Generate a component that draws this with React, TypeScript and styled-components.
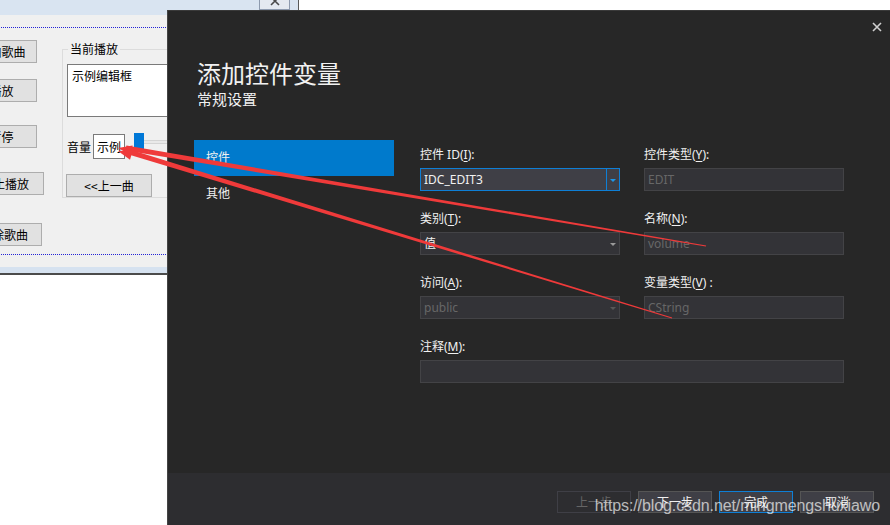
import React from "react";
import styled, { createGlobalStyle } from "styled-components";

const GlobalStyle = createGlobalStyle`
  html, body {
    margin: 0;
    padding: 0;
    background: #ffffff;
  }
  body {
    font-family: "Noto Sans", "Noto Sans CJK SC", sans-serif;
  }
`;

const Desktop = styled.div`
  position: relative;
  width: 890px;
  height: 525px;
  overflow: hidden;
  background: #ffffff;
`;

/* ---------- the old MFC dialog in the background ---------- */

const BackWindow = styled.div`
  width: 299px;
  height: 275px;
  box-sizing: border-box;
  display: flex;
  flex-direction: column;
  border-right: 1px solid #5a5a5a;
  border-bottom: 2px solid #4b4b4b;
  font-family: "Noto Sans CJK SC", sans-serif;
  font-size: 12px;
  color: #000000;
`;

const TitleStrip = styled.div`
  height: 15px;
  flex-shrink: 0;
  background: #d9e4f1;
  display: flex;
  justify-content: flex-end;
  padding-right: 8px;
`;

const CloseBox = styled.div`
  width: 31px;
  height: 18px;
  margin-top: -8px;
  box-sizing: border-box;
  border: 1px solid #8d9aae;
  background: #e4e9f0;
  display: flex;
  align-items: center;
  justify-content: center;
`;

const WinBody = styled.div`
  flex: 1;
  background: #f0f0f0;
  overflow: hidden;
`;

const BottomBand = styled.div`
  height: 6px;
  flex-shrink: 0;
  background: #d6e2f0;
`;

const DottedFrame = styled.div`
  margin: 12px 0 0 -40px;
  width: 420px;
  height: 228px;
  box-sizing: border-box;
  border: 1px dotted #2323d6;
  padding-left: 5px;
  display: flex;
  align-items: flex-start;
`;

const ButtonColumn = styled.div`
  display: flex;
  flex-direction: column;
  align-items: flex-start;
  padding-top: 12px;
  width: 78px;
`;

const WinButton = styled.div<{ $width: number; $top?: number; $shift?: number }>`
  width: ${(p) => p.$width}px;
  height: 23px;
  margin-top: ${(p) => p.$top ?? 0}px;
  margin-left: ${(p) => p.$shift ?? 0}px;
  box-sizing: border-box;
  border: 1px solid #adadad;
  background: #e1e1e1;
  display: flex;
  align-items: center;
  justify-content: center;
  white-space: nowrap;
  line-height: 14px;
`;

const GroupBox = styled.fieldset`
  margin: 14px 0 0 18px;
  padding: 0 0 0 4px;
  width: 230px;
  min-width: 0;
  border: 1px solid #dcdcdc;
`;

const GroupLegend = styled.legend`
  margin-left: 1px;
  padding: 0 2px;
  line-height: 14px;
  font-size: 12px;
`;

const EditArea = styled.div`
  margin-top: 8px;
  width: 170px;
  height: 53px;
  box-sizing: border-box;
  border: 1px solid #7a7a7a;
  background: #ffffff;
  padding: 4px;
  line-height: 14px;
`;

const VolumeRow = styled.div`
  margin-top: 17px;
  height: 25px;
  display: flex;
  align-items: center;
`;

const VolumeLabel = styled.span`
  margin-right: 2px;
`;

const VolumeBox = styled.div`
  width: 32px;
  height: 25px;
  box-sizing: border-box;
  border: 1px solid #7a7a7a;
  background: #ffffff;
  padding-left: 3px;
  line-height: 23px;
  overflow: hidden;
  white-space: nowrap;
`;

const Slider = styled.div`
  align-self: flex-start;
  margin: -1px 0 0 9px;
  height: 18px;
  display: flex;
  align-items: center;
`;

const SliderThumb = styled.div`
  width: 10px;
  height: 18px;
  background: #0078d7;
`;

const SliderTrack = styled.div`
  width: 100px;
  height: 2px;
  border-top: 1px solid #d4d4d4;
  border-bottom: 1px solid #d4d4d4;
  background: #e9e9e9;
`;

/* ---------- the dark Visual Studio dialog ---------- */

const DarkDialog = styled.div`
  position: absolute;
  left: 167px;
  top: 10px;
  width: 723px;
  height: 515px;
  box-sizing: border-box;
  background: #272727;
  border-left: 1px solid #444444;
  border-top: 1px solid #3a3a3a;
  display: flex;
  flex-direction: column;
  color: #f1f1f1;
  font-family: "Noto Sans", "Noto Sans CJK SC", sans-serif;
`;

const TopBar = styled.div`
  display: flex;
  justify-content: flex-end;
  padding: 11px 8px 0 0;
  height: 10px;
`;

const Title = styled.h1`
  margin: 27px 0 0 29px;
  font-size: 24px;
  line-height: 30px;
  font-weight: 400;
`;

const SubTitle = styled.div`
  margin: 0 0 0 29px;
  font-size: 15px;
  line-height: 20px;
`;

const DialogBody = styled.div`
  display: flex;
  align-items: flex-start;
  margin-top: 31px;
  padding-left: 26px;
`;

const SideNav = styled.div`
  width: 200px;
  display: flex;
  flex-direction: column;
`;

const NavItem = styled.div<{ $active?: boolean }>`
  height: 36px;
  line-height: 36px;
  padding-left: 12px;
  font-size: 12px;
  background: ${(p) => (p.$active ? "#007acc" : "transparent")};
  color: #f1f1f1;
`;

const Form = styled.div`
  margin-left: 26px;
  padding-top: 7px;
  display: grid;
  grid-template-columns: 200px 200px;
  column-gap: 24px;
  row-gap: 20px;
`;

const Field = styled.div<{ $wide?: boolean }>`
  display: flex;
  flex-direction: column;
  grid-column: ${(p) => (p.$wide ? "1 / -1" : "auto")};
`;

const FieldLabel = styled.label`
  font-size: 12px;
  line-height: 16px;
  margin-bottom: 5px;
  color: #f1f1f1;
  white-space: nowrap;

  u {
    text-underline-offset: 2px;
  }
`;

const InputBox = styled.div<{ $focused?: boolean; $disabled?: boolean }>`
  height: 23px;
  box-sizing: border-box;
  display: flex;
  align-items: stretch;
  border: 1px solid ${(p) => (p.$focused ? "#0e7fd6" : "#434346")};
  background: ${(p) => (p.$focused ? "#3f3f46" : "#333337")};
  color: ${(p) => (p.$disabled ? "#676767" : "#f1f1f1")};
  font-size: 12px;
`;

const InputText = styled.span`
  flex: 1;
  padding-left: 3px;
  line-height: 21px;
  white-space: nowrap;
  overflow: hidden;
`;

const ArrowCell = styled.span<{ $focused?: boolean; $disabled?: boolean }>`
  width: 12px;
  display: flex;
  align-items: center;
  justify-content: center;
  border-left: 1px solid ${(p) => (p.$focused ? "#0e7fd6" : "transparent")};

  &::after {
    content: "";
    width: 0;
    height: 0;
    margin-top: 1px;
    border-left: 3px solid transparent;
    border-right: 3px solid transparent;
    border-top: 3px solid
      ${(p) => (p.$focused ? "#1c97ea" : p.$disabled ? "#585858" : "#9a9a9a")};
  }
`;

const Footer = styled.div`
  margin-top: auto;
  height: 52px;
  box-sizing: border-box;
  background: #2d2d30;
  display: flex;
  justify-content: flex-end;
  align-items: flex-start;
  gap: 7px;
  padding: 18px 16px 0 0;
`;

const FooterButton = styled.div<{ $variant?: "disabled" | "primary" }>`
  width: 74px;
  height: 22px;
  box-sizing: border-box;
  display: flex;
  align-items: center;
  justify-content: center;
  font-size: 12px;
  border: 1px solid
    ${(p) =>
      p.$variant === "primary"
        ? "#0e7fd6"
        : p.$variant === "disabled"
        ? "#3f3f46"
        : "#555555"};
  background: ${(p) => (p.$variant === "disabled" ? "#2d2d30" : "#3f3f46")};
  color: ${(p) => (p.$variant === "disabled" ? "#656565" : "#f1f1f1")};
`;

/* ---------- overlays: red arrows and the blog watermark ---------- */

const ArrowLayer = styled.svg`
  position: absolute;
  left: 0;
  top: 0;
  pointer-events: none;
`;

const Watermark = styled.div`
  position: absolute;
  right: 10px;
  bottom: 10px;
  font-family: "Liberation Sans", Arial, sans-serif;
  font-size: 16px;
  line-height: 18px;
  letter-spacing: -0.1px;
  color: rgba(255, 255, 255, 0.68);
  pointer-events: none;
`;

const taper = (
  x1: number,
  y1: number,
  x2: number,
  y2: number,
  w1: number,
  w2: number
) => {
  const dx = x2 - x1;
  const dy = y2 - y1;
  const len = Math.hypot(dx, dy);
  const nx = -dy / len;
  const ny = dx / len;
  return [
    [x1 + (nx * w1) / 2, y1 + (ny * w1) / 2],
    [x2 + (nx * w2) / 2, y2 + (ny * w2) / 2],
    [x2 - (nx * w2) / 2, y2 - (ny * w2) / 2],
    [x1 - (nx * w1) / 2, y1 - (ny * w1) / 2],
  ]
    .map((pt) => pt.map((v) => v.toFixed(1)).join(","))
    .join(" ");
};

const head = (x1: number, y1: number, x2: number, y2: number) => {
  const dx = x2 - x1;
  const dy = y2 - y1;
  const len = Math.hypot(dx, dy);
  const ux = dx / len;
  const uy = dy / len;
  const bx = x1 + ux * 14;
  const by = y1 + uy * 14;
  return [
    [x1, y1],
    [bx - uy * 5, by + ux * 5],
    [bx + uy * 5, by - ux * 5],
  ]
    .map((pt) => pt.map((v) => v.toFixed(1)).join(","))
    .join(" ");
};

const arrows = [
  { x1: 118, y1: 148, x2: 706, y2: 246 },
  { x1: 118, y1: 151, x2: 672, y2: 318 },
];

const Arrows = () => (
  <ArrowLayer width="890" height="525" viewBox="0 0 890 525">
    {arrows.map((a, i) => (
      <g key={i} fill="#ef3a3a">
        <polygon points={taper(a.x1 + 8, a.y1, a.x2, a.y2, 5, 1)} />
        <polygon points={head(a.x1, a.y1, a.x2, a.y2)} />
      </g>
    ))}
  </ArrowLayer>
);

const CrossIcon = ({ size, color }: { size: number; color: string }) => (
  <svg width={size} height={size} viewBox="0 0 10 10">
    <path d="M1 1 L9 9 M9 1 L1 9" stroke={color} strokeWidth="1.6" />
  </svg>
);

const App = () => (
  <Desktop>
    <GlobalStyle />
    <BackWindow>
      <TitleStrip>
        <CloseBox>
          <CrossIcon size={10} color="#4a4a4a" />
        </CloseBox>
      </TitleStrip>
      <WinBody>
        <DottedFrame>
          <ButtonColumn>
            <WinButton $width={71}>添加歌曲</WinButton>
            <WinButton $width={71} $top={16}>
              播放
            </WinButton>
            <WinButton $width={71} $top={23}>
              暂停
            </WinButton>
            <WinButton $width={78} $top={24}>
              停止播放
            </WinButton>
            <WinButton $width={76} $top={28}>
              删除歌曲
            </WinButton>
          </ButtonColumn>
          <GroupBox>
            <GroupLegend>当前播放</GroupLegend>
            <EditArea>示例编辑框</EditArea>
            <VolumeRow>
              <VolumeLabel>音量</VolumeLabel>
              <VolumeBox>示例</VolumeBox>
              <Slider>
                <SliderThumb />
                <SliderTrack />
              </Slider>
            </VolumeRow>
            <WinButton $width={86} $top={15} $shift={-1}>
              &lt;&lt;上一曲
            </WinButton>
          </GroupBox>
        </DottedFrame>
      </WinBody>
      <BottomBand />
    </BackWindow>

    <DarkDialog>
      <TopBar>
        <CrossIcon size={10} color="#cfcfcf" />
      </TopBar>
      <Title>添加控件变量</Title>
      <SubTitle>常规设置</SubTitle>
      <DialogBody>
        <SideNav>
          <NavItem $active>控件</NavItem>
          <NavItem>其他</NavItem>
        </SideNav>
        <Form>
          <Field>
            <FieldLabel>
              控件 ID(<u>I</u>):
            </FieldLabel>
            <InputBox $focused>
              <InputText>IDC_EDIT3</InputText>
              <ArrowCell $focused />
            </InputBox>
          </Field>
          <Field>
            <FieldLabel>
              控件类型(<u>Y</u>):
            </FieldLabel>
            <InputBox $disabled>
              <InputText>EDIT</InputText>
            </InputBox>
          </Field>
          <Field>
            <FieldLabel>
              类别(<u>T</u>):
            </FieldLabel>
            <InputBox>
              <InputText>值</InputText>
              <ArrowCell />
            </InputBox>
          </Field>
          <Field>
            <FieldLabel>
              名称(<u>N</u>):
            </FieldLabel>
            <InputBox $disabled>
              <InputText>volume</InputText>
            </InputBox>
          </Field>
          <Field>
            <FieldLabel>
              访问(<u>A</u>):
            </FieldLabel>
            <InputBox $disabled>
              <InputText>public</InputText>
              <ArrowCell $disabled />
            </InputBox>
          </Field>
          <Field>
            <FieldLabel>
              变量类型(<u>V</u>) :
            </FieldLabel>
            <InputBox $disabled>
              <InputText>CString</InputText>
            </InputBox>
          </Field>
          <Field $wide>
            <FieldLabel>
              注释(<u>M</u>):
            </FieldLabel>
            <InputBox>
              <InputText />
            </InputBox>
          </Field>
        </Form>
      </DialogBody>
      <Footer>
        <FooterButton $variant="disabled">上一步</FooterButton>
        <FooterButton>下一步</FooterButton>
        <FooterButton $variant="primary">完成</FooterButton>
        <FooterButton>取消</FooterButton>
      </Footer>
    </DarkDialog>

    <Arrows />
    <Watermark>https://blog.csdn.net/mingmengshuxiawo</Watermark>
  </Desktop>
);

export default App;
